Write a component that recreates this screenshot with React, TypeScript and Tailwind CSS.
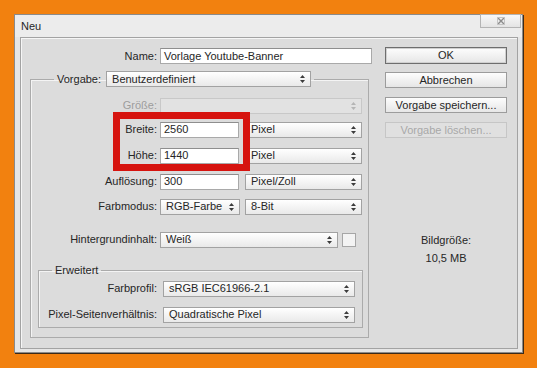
import React from 'react';

const Arrows = ({ disabled }: { disabled?: boolean }) => (
  <svg width="5" height="8" viewBox="0 0 5 8" className="shrink-0">
    <path d="M2.5 0L5 3H0Z M2.5 8L0 5H5Z" fill={disabled ? '#b5b5b5' : '#3c3c3c'} />
  </svg>
);

function Select({ value, className, disabled }: { value?: string; className: string; disabled?: boolean }) {
  return (
    <div
      className={`flex h-4 items-center justify-between border pl-[5px] pr-[5px] ${
        disabled
          ? 'border-[#c8c8c8] bg-[#e2e2e2]'
          : 'border-[#a2a2a2] bg-linear-to-b from-white to-[#e9e9e9]'
      } ${className}`}
    >
      <span className="leading-none">{value}</span>
      <Arrows disabled={disabled} />
    </div>
  );
}

function Input({ value, className }: { value: string; className: string }) {
  return (
    <div className={`flex h-4 items-center border border-[#a9a9a9] border-t-[#8e8e8e] bg-white pl-[3px] leading-none ${className}`}>
      {value}
    </div>
  );
}

function Button({ label, primary, disabled, className }: { label: string; primary?: boolean; disabled?: boolean; className: string }) {
  return (
    <div
      className={`flex w-[122px] items-center justify-center border leading-none ${
        disabled
          ? 'h-4 border-[#c6c6c6] bg-[#e0e0e0] text-[#a8a8a8]'
          : primary
          ? 'h-[17px] border-[#6e6e6e] bg-linear-to-b from-[#fdfdfd] to-[#e6e6e6] shadow-[inset_0_0_0_1px_#d0d0d0]'
          : 'h-4 border-[#9c9c9c] bg-linear-to-b from-[#fdfdfd] to-[#e6e6e6]'
      } ${className}`}
    >
      {label}
    </div>
  );
}

export default function App() {
  return (
    <div className="relative h-[368px] w-[537px] overflow-hidden bg-[#f2810f] pl-[14px] pt-[14px] font-['Liberation_Sans',Arial,sans-serif] text-[11px] text-[#262626]">
      {/* dialog */}
      <div className="flex h-[339px] w-[509px] flex-col border border-[#8a8a8a] bg-[#e6e6e6] pb-[3px] pl-[5px] pr-[4px] shadow-[1px_1px_0_#3b2a18]">
        {/* title bar */}
        <div className="-ml-[5px] -mr-[4px] flex h-[22px] items-start justify-between bg-[#ececec]">
          <span className="ml-[6px] mt-[5px] leading-[13px]">Neu</span>
          <div className="-mt-[1px] mr-[1px] flex h-[14px] w-[41px] items-center justify-center border border-[#b4b4b4] bg-linear-to-b from-[#f8f8f8] to-[#e4e4e4]">
            <svg width="8" height="8" viewBox="0 0 8 8">
              <path d="M1 1L7 7M7 1L1 7" stroke="#8c8c8c" strokeWidth="1.4" />
              <rect x="0.5" y="0.5" width="7" height="7" fill="none" stroke="#c4c4c4" />
            </svg>
          </div>
        </div>

        {/* panel */}
        <div className="flex flex-1 border border-[#a3a3a3] bg-[#dcdcdc] shadow-[inset_1px_1px_0_#f6f6f6]">
          {/* left column */}
          <div className="w-[351px] pl-[9px] pt-[10px]">
            <div className="flex h-4 items-center">
              <span className="w-[127px] text-right">Name:</span>
              <Input className="ml-[3px] w-[212px]" value="Vorlage Youtube-Banner" />
            </div>

            <fieldset className="mt-[7px] w-[339px] border border-[#ababab] pb-[9px] shadow-[inset_1px_1px_0_#f4f4f4]">
              <legend className="ml-[23px] px-[3px]">
                <div className="flex items-center">
                  <span>Vorgabe:</span>
                  <Select className="ml-[5px] w-[205px]" value="Benutzerdefiniert" />
                </div>
              </legend>

              <div className="mt-[10px] flex h-4 items-center">
                <span className="w-[126px] text-right text-[#9c9c9c]">Größe:</span>
                <Select className="ml-[3px] w-[202px]" disabled />
              </div>
              <div className="mt-[8px] flex h-4 items-center">
                <span className="w-[126px] text-right">Breite:</span>
                <Input className="ml-[3px] w-[79px]" value="2560" />
                <Select className="ml-[6px] w-[117px]" value="Pixel" />
              </div>
              <div className="mt-[10px] flex h-4 items-center">
                <span className="w-[126px] text-right">Höhe:</span>
                <Input className="ml-[3px] w-[79px]" value="1440" />
                <Select className="ml-[6px] w-[117px]" value="Pixel" />
              </div>
              <div className="mt-[10px] flex h-4 items-center">
                <span className="w-[126px] text-right">Auflösung:</span>
                <Input className="ml-[3px] w-[79px]" value="300" />
                <Select className="ml-[6px] w-[117px]" value="Pixel/Zoll" />
              </div>
              <div className="mt-[9px] flex h-4 items-center">
                <span className="w-[126px] text-right">Farbmodus:</span>
                <Select className="ml-[3px] w-[80px]" value="RGB-Farbe" />
                <Select className="ml-[5px] w-[117px]" value="8-Bit" />
              </div>
              <div className="mt-[17px] flex h-4 items-center">
                <span className="w-[126px] text-right">Hintergrundinhalt:</span>
                <Select className="ml-[3px] w-[178px]" value="Weiß" />
                <div className="ml-[4px] h-[14px] w-[14px] border border-[#a6a6a6] bg-[#f3f3f3]" />
              </div>

              <fieldset className="ml-[7px] mt-[16px] w-[325px] border border-[#ababab] pb-[4px] shadow-[inset_1px_1px_0_#f4f4f4]">
                <legend className="ml-[13px] px-[3px] leading-[13px]">Erweitert</legend>
                <div className="mt-[4px] flex h-4 items-center">
                  <span className="w-[118px] text-right">Farbprofil:</span>
                  <Select className="ml-[6px] w-[192px]" value="sRGB IEC61966-2.1" />
                </div>
                <div className="mt-[10px] flex h-4 items-center">
                  <span className="w-[118px] text-right">Pixel-Seitenverhältnis:</span>
                  <Select className="ml-[6px] w-[192px]" value="Quadratische Pixel" />
                </div>
              </fieldset>
            </fieldset>
          </div>

          {/* right column */}
          <div className="ml-[13px] flex w-[122px] flex-col items-center pt-[9px]">
            <Button label="OK" primary className="" />
            <Button label="Abbrechen" className="mt-[8px]" />
            <Button label="Vorgabe speichern..." className="mt-[9px]" />
            <Button label="Vorgabe löschen..." disabled className="mt-[9px]" />
            <span className="mt-[96px] leading-[13px]">Bildgröße:</span>
            <span className="mt-[5px] leading-[13px]">10,5 MB</span>
          </div>
        </div>
      </div>

      {/* red highlight around width / height */}
      <div className="absolute left-[113px] top-[112px] h-[59px] w-[137px] border-[7px] border-[#d6140f]" />
    </div>
  );
}
